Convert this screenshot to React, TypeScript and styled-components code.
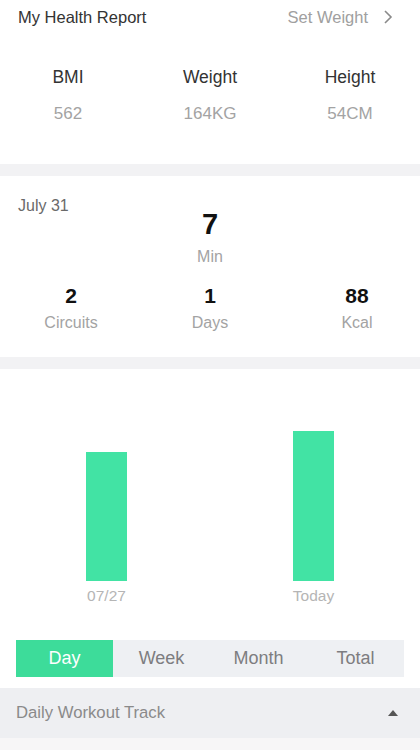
import styled, { createGlobalStyle } from "styled-components";

const GlobalStyle = createGlobalStyle`
    body {
        margin: 0;
        background: #ffffff;
        font-family: "Liberation Sans", Arial, sans-serif;
    }
`;

const Page = styled.div`
    width: 420px;
    height: 750px;
    overflow: hidden;
    display: flex;
    flex-direction: column;
    background: #f7f6f7;
`;

const Section = styled.section`
    background: #ffffff;
`;

const Divider = styled.div`
    height: 12px;
    background: #f2f2f4;
`;

const Header = styled.div`
    height: 34px;
    padding: 0 27px 0 18px;
    display: flex;
    align-items: center;
    justify-content: space-between;
`;

const Title = styled.span`
    font-size: 16.5px;
    color: #333;
`;

const SetWeight = styled.span`
    display: flex;
    align-items: center;
    gap: 15px;
    font-size: 16.5px;
    color: #a0a0a0;
`;

const MetricGrid = styled.div`
    display: grid;
    grid-template-columns: repeat(3, 1fr);
    padding: 33px 0 40px;
`;

const Metric = styled.div<{ $shift?: number }>`
    display: flex;
    flex-direction: column;
    align-items: center;
    gap: 16px;
    transform: translateX(${({ $shift }) => $shift || 0}px);
`;

const MetricLabel = styled.span`
    font-size: 17.5px;
    color: #333;
`;

const MetricValue = styled.span`
    font-size: 17px;
    color: #a3a3a3;
`;

const Summary = styled.div`
    height: 181px;
    padding-top: 21px;
    box-sizing: border-box;
    display: flex;
    flex-direction: column;
`;

const DateLabel = styled.span`
    padding-left: 18px;
    font-size: 16px;
    color: #6a6a6a;
    height: 19px;
`;

const MainStat = styled.div`
    display: flex;
    flex-direction: column;
    align-items: center;
    margin-top: -9px;
`;

const BigNumber = styled.span<{ $size: number }>`
    font-size: ${({ $size }) => $size}px;
    font-weight: bold;
    color: #111;
    line-height: 1.2;
`;

const Unit = styled.span<{ $gap: number }>`
    font-size: 16px;
    color: #a3a3a3;
    margin-top: ${({ $gap }) => $gap}px;
`;

const StatRow = styled.div`
    display: grid;
    grid-template-columns: repeat(3, 1fr);
    margin-top: 17px;
`;

const Stat = styled.div<{ $shift?: number }>`
    display: flex;
    flex-direction: column;
    align-items: center;
    transform: translateX(${({ $shift }) => $shift || 0}px);
`;

const Chart = styled.div`
    height: 212px;
    display: grid;
    grid-template-columns: 1fr 1fr;
    align-items: end;
    padding: 0 3px;
`;

const BarColumn = styled.div`
    display: flex;
    justify-content: center;
`;

const Bar = styled.div`
    width: 41px;
    background: #42e3a4;
`;

const LabelRow = styled.div`
    display: grid;
    grid-template-columns: 1fr 1fr;
    padding: 6px 3px 0;
    height: 22px;
`;

const BarLabel = styled.span`
    text-align: center;
    font-size: 15.5px;
    color: #b5b5b5;
`;

const Tabs = styled.div`
    margin: 31px 16px 11px;
    height: 37px;
    display: grid;
    grid-template-columns: repeat(4, 1fr);
    background: #eef0f3;
`;

const Tab = styled.div<{ $active?: boolean }>`
    display: flex;
    align-items: center;
    justify-content: center;
    font-size: 18px;
    color: ${({ $active }) => ($active ? "#ffffff" : "#7d7d80")};
    background: ${({ $active }) => ($active ? "#3ddc9a" : "transparent")};
`;

const Track = styled.div`
    height: 50px;
    padding: 0 22px 0 16px;
    display: flex;
    align-items: center;
    justify-content: space-between;
    background: #eeeff2;
    font-size: 16.7px;
    color: #8a8a8a;
`;

const Caret = styled.span`
    width: 0;
    height: 0;
    border-left: 5px solid transparent;
    border-right: 5px solid transparent;
    border-bottom: 6px solid #555;
`;

const metrics = [
    { label: "BMI", value: "562", shift: -2 },
    { label: "Weight", value: "164KG", shift: 0 },
    { label: "Height", value: "54CM", shift: 0 },
];

const stats = [
    { value: "2", unit: "Circuits", shift: 1 },
    { value: "1", unit: "Days", shift: 0 },
    { value: "88", unit: "Kcal", shift: 7 },
];

const bars = [
    { label: "07/27", minutes: 129 },
    { label: "Today", minutes: 150 },
];

const tabs = ["Day", "Week", "Month", "Total"];

export default function App() {
    return (
        <>
            <GlobalStyle />
            <Page>
                <Section>
                    <Header>
                        <Title>My Health Report</Title>
                        <SetWeight>
                            Set Weight
                            <svg width="10" height="16" viewBox="0 0 10 16" fill="none">
                                <path d="M2 2 L8 8 L2 14" stroke="#8a8a8a" strokeWidth="1.6" />
                            </svg>
                        </SetWeight>
                    </Header>
                    <MetricGrid>
                        {metrics.map((m) => (
                            <Metric key={m.label} $shift={m.shift}>
                                <MetricLabel>{m.label}</MetricLabel>
                                <MetricValue>{m.value}</MetricValue>
                            </Metric>
                        ))}
                    </MetricGrid>
                </Section>
                <Divider />
                <Section>
                    <Summary>
                        <DateLabel>July 31</DateLabel>
                        <MainStat>
                            <BigNumber $size={29}>7</BigNumber>
                            <Unit $gap={6}>Min</Unit>
                        </MainStat>
                        <StatRow>
                            {stats.map((s) => (
                                <Stat key={s.unit} $shift={s.shift}>
                                    <BigNumber $size={21}>{s.value}</BigNumber>
                                    <Unit $gap={6}>{s.unit}</Unit>
                                </Stat>
                            ))}
                        </StatRow>
                    </Summary>
                </Section>
                <Divider />
                <Section>
                    <Chart>
                        {bars.map((b) => (
                            <BarColumn key={b.label}>
                                <Bar style={{ height: b.minutes }} />
                            </BarColumn>
                        ))}
                    </Chart>
                    <LabelRow>
                        {bars.map((b) => (
                            <BarLabel key={b.label}>{b.label}</BarLabel>
                        ))}
                    </LabelRow>
                    <Tabs>
                        {tabs.map((t, i) => (
                            <Tab key={t} $active={i === 0}>
                                {t}
                            </Tab>
                        ))}
                    </Tabs>
                </Section>
                <Track>
                    Daily Workout Track
                    <Caret />
                </Track>
            </Page>
        </>
    );
}
